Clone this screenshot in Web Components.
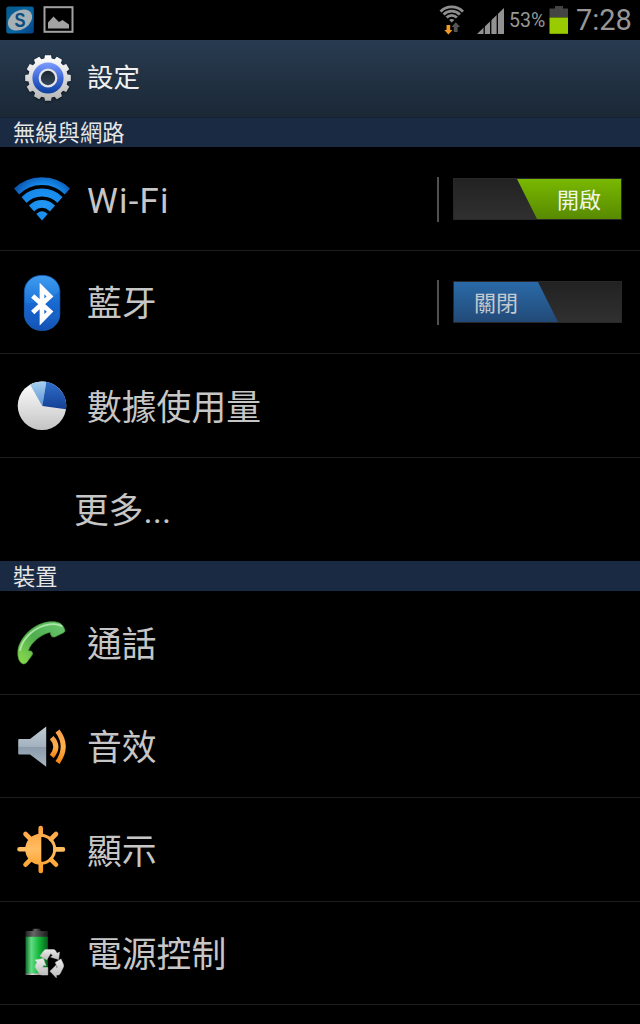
<!DOCTYPE html>
<html lang="zh-Hant">
<head>
<meta charset="utf-8">
<title>設定</title>
<style>
    body {
        margin: 0;
        width: 640px;
        height: 1024px;
        overflow: hidden;
        background: #000;
        color: #c6c6c6;
        font-family: Roboto, "Noto Sans CJK TC", sans-serif;
    }
</style>
</head>
<body>
<settings-screen></settings-screen>

<script>
const icons = {
    gear: `
        <defs>
            <linearGradient id="metal" x1="0" y1="0" x2="0" y2="1"><stop offset="0" stop-color="#fff"/><stop offset="1" stop-color="#b5b5b5"/></linearGradient>
            <linearGradient id="blue" x1="0" y1="0" x2="0" y2="1"><stop offset="0" stop-color="#7c9bff"/><stop offset=".5" stop-color="#3f68d8"/><stop offset="1" stop-color="#0b3f9c"/></linearGradient>
            <linearGradient id="hole" x1="0" y1="0" x2="0" y2="1"><stop offset="0" stop-color="#1a2431"/><stop offset="1" stop-color="#33475a"/></linearGradient>
        </defs>
        <path id="gearBody" fill="url(#metal)" style="filter: drop-shadow(0 1px 1px #0008)"/>
        <circle cx="30" cy="30" r="15.6" fill="url(#blue)"/>
        <circle cx="30" cy="30" r="8.3" fill="url(#hole)" stroke="#e4e4e4" stroke-width="2.2"/>`,
    wifi: `
        <defs>
            <radialGradient id="g" gradientUnits="userSpaceOnUse" cx="32" cy="36" r="34"><stop offset="0" stop-color="#2196f3"/><stop offset=".62" stop-color="#1588ea"/><stop offset="1" stop-color="#0a4fa6"/></radialGradient>
            <clipPath id="wedge"><path d="M30 51.5L-19 -4.5H79z"/></clipPath>
        </defs>
        <g clip-path="url(#wedge)" fill="none" stroke="url(#g)" stroke-width="7.8">
            <circle cx="30" cy="49" r="36.8"/>
            <circle cx="30" cy="49" r="25.5"/>
            <circle cx="30" cy="49" r="14.1"/>
            <circle cx="30" cy="49" r="6.7" fill="url(#g)" stroke="none"/>
        </g>`,
    bluetooth: `
        <defs>
            <linearGradient id="g" x1="0" y1="0" x2="0" y2="1"><stop offset="0" stop-color="#3f9df0"/><stop offset=".5" stop-color="#1c74d8"/><stop offset="1" stop-color="#1450b4"/></linearGradient>
        </defs>
        <rect x="12.4" y="2.4" width="35.4" height="55" rx="17" ry="16" fill="url(#g)" stroke="#1b62bd" stroke-width=".8"/>
        <path d="M47.5 18v20c-8 6-20 9-34.5 8V30c14 1 27-4 34.5-12z" fill="#0c4dbb" opacity=".25"/>
        <path d="M20.7 23L38 38.6L30 46.8V15.5L38 23.5L20.7 39.5" fill="none" stroke="#fff" stroke-width="4.7" stroke-miterlimit="8"/>`,
    usage: `
        <defs>
            <linearGradient id="w" x1="0" y1="0" x2="0" y2="1"><stop offset="0" stop-color="#fff"/><stop offset="1" stop-color="#c4c4c4"/></linearGradient>
            <linearGradient id="d" x1="0" y1="0" x2="0" y2="1"><stop offset="0" stop-color="#2f6fca"/><stop offset="1" stop-color="#143f94"/></linearGradient>
            <linearGradient id="l" x1="0" y1="0" x2="0" y2="1"><stop offset="0" stop-color="#a9d0f0"/><stop offset="1" stop-color="#5b94d4"/></linearGradient>
        </defs>
        <circle cx="30" cy="29.7" r="24.3" fill="url(#w)"/>
        <path d="M30.3 30L18 8.6A24.3 24.3 0 0 1 34.3 5.8z" fill="url(#l)"/>
        <path d="M30.3 30L34.3 5.8A24.3 24.3 0 0 1 54 33.3z" fill="url(#d)"/>`,
    phone: `
        <defs>
            <linearGradient id="g" x1="1" y1="0" x2="0" y2="1"><stop offset="0" stop-color="#6cc873"/><stop offset=".5" stop-color="#4fae4f"/><stop offset="1" stop-color="#8fdc4c"/></linearGradient>
        </defs>
        <path d="M6 37C8 24 22 10 38 8.8C46 8.3 51 10 53 17.5Q53 19 51.5 19.7L42.5 24Q39.5 24.6 38.8 21.8L38.3 19.3C29 21 19 29.5 16.3 37.5L19.5 38.3Q21.5 40 20 42.3L14.3 50Q11.5 52 9.3 50C6 47 5.5 42 6 37z" fill="url(#g)" stroke="#4d9d3e" stroke-width=".7"/>
        <path d="M8 37C11 25 23 13 38 11.3C43 10.8 47 11.5 49.5 13" fill="none" stroke="#b9edb4" stroke-width="1.8" stroke-linecap="round" opacity=".85"/>`,
    sound: `
        <defs>
            <linearGradient id="g" x1="0" y1="0" x2="0" y2="1"><stop offset="0" stop-color="#c2ccd5"/><stop offset=".5" stop-color="#a3b1bf"/><stop offset=".52" stop-color="#8c9cac"/><stop offset="1" stop-color="#a9b6c2"/></linearGradient>
            <linearGradient id="o" x1="0" y1="0" x2="0" y2="1"><stop offset="0" stop-color="#f9a04a"/><stop offset=".5" stop-color="#ffb04d"/><stop offset="1" stop-color="#f68412"/></linearGradient>
        </defs>
        <path d="M7.3 22H18L34.2 9.5V49.7L18 37.5H7.3Q6.2 37.5 6.2 36.4V23.1Q6.2 22 7.3 22z" fill="url(#g)"/>
        <g fill="none" stroke="url(#o)" stroke-width="5">
            <path d="M39.7 20.6Q48 29.5 39.7 39.3"/>
            <path d="M45.5 14Q57 29.5 45.5 45.5"/>
        </g>`,
    display: `
        <defs>
            <linearGradient id="g" gradientUnits="userSpaceOnUse" x1="0" y1="6" x2="0" y2="53"><stop offset="0" stop-color="#ffa03a"/><stop offset=".5" stop-color="#ffbd62"/><stop offset="1" stop-color="#ff9a1f"/></linearGradient>
        </defs>
        <path d="M28.7 8V15M28.8 44V51M7.5 29.3H14M43.5 29.4H51M13.5 14L18.5 19M39 39.7L44 44.7M44 14L39 19M18.5 39.7L13.5 44.7" stroke="url(#g)" stroke-width="4.6" stroke-linecap="round"/>
        <circle cx="28.7" cy="29.3" r="14" fill="none" stroke="url(#g)" stroke-width="3"/>
        <path d="M29.3 14.3A15 15 0 0 0 29.3 44.3z" fill="url(#g)"/>`,
    power: `
        <defs>
            <linearGradient id="g"><stop offset="0" stop-color="#0b6b25"/><stop offset=".25" stop-color="#63dc85"/><stop offset=".6" stop-color="#14b83a"/><stop offset="1" stop-color="#075f1c"/></linearGradient>
            <linearGradient id="c"><stop offset="0" stop-color="#222"/><stop offset=".35" stop-color="#666"/><stop offset="1" stop-color="#1a1a1a"/></linearGradient>
            <linearGradient id="b"><stop offset="0" stop-color="#555"/><stop offset=".3" stop-color="#ddd"/><stop offset="1" stop-color="#555"/></linearGradient>
            <linearGradient id="r" x1="0" y1="0" x2="0" y2="1"><stop offset="0" stop-color="#ececec"/><stop offset="1" stop-color="#bcbcbc"/></linearGradient>
        </defs>
        <rect x="20.3" y="4.7" width="8.4" height="4" rx="1" fill="url(#c)"/>
        <rect x="13.5" y="7" width="22.4" height="7" rx="1" fill="url(#c)"/>
        <rect x="13.5" y="12.8" width="22.4" height="37" fill="url(#g)"/>
        <rect x="13.5" y="49.3" width="22.4" height="1.7" fill="url(#b)"/>
        <g fill="url(#r)" stroke="#d2d2d2" stroke-width=".5" stroke-linejoin="round">
            <path d="M28 32L32 26.5Q32.8 25.6 34.2 25.6H41.3Q42.8 25.6 43.6 26.8L45 29.3L47.5 28L46.6 35.5L38.6 33L40.8 31.6L38.7 29.5L34.8 35.8z"/>
            <path d="M23 36L31.3 34.4L34 41.8L31.8 40.9L30.3 43.5H35.8V51H30Q28.3 51 27.4 49.6L23.6 43.8Q22.8 42.5 23.5 41L25 38.3z"/>
            <path d="M43.2 38.5L49 35L51.4 40.3Q52 42 51.2 43.5L48.2 49.5Q47.4 51 45.8 51H44.3V53.8L38 47.2L44.3 41V43.5H45.7z"/>
        </g>`
};

class SettingsIcon extends HTMLElement {
    constructor() {
        super();
        this.attachShadow({ mode: 'open' });
    }

    connectedCallback() {
        this.shadowRoot.innerHTML = `
            <style>
            :host { display: block; width: 60px; height: 60px; }
            svg { display: block; }
            </style>
            <svg width="60" height="60" viewBox="0 0 60 60">${icons[this.getAttribute('name')]}</svg>`;

        const gear = this.shadowRoot.querySelector('#gearBody');
        if (gear) {
            gear.setAttribute('d', this.gearPath(12));
        }
    }

    // outline of a gear around 30,30: each tooth is two outer and two inner points
    gearPath(teeth) {
        const steps = [[-0.35, 19.8], [-0.25, 23], [0.25, 23], [0.35, 19.8]];
        const points = [];
        for (let i = 0; i < teeth; i++) {
            for (const [shift, r] of steps) {
                const a = (i + shift) / teeth * Math.PI * 2;
                points.push((30 + Math.sin(a) * r).toFixed(2) + ' ' + (30 - Math.cos(a) * r).toFixed(2));
            }
        }
        return 'M' + points.join('L') + 'z';
    }
}
customElements.define('settings-icon', SettingsIcon);

const statusTemplate = document.createElement('template');
statusTemplate.innerHTML = `
    <style>
    :host {
        display: flex;
        height: 40px;
        background: #000;
        color: #979797;
    }
    svg { display: block; flex: none; }
    .notices { flex: 1; display: flex; }
    .percent { width: 40px; font-size: 19.5px; line-height: 41px; }
    .clock { width: 71px; padding-left: 7px; box-sizing: border-box; font-size: 29px; line-height: 40px; }
    </style>
    <div class="notices">
        <svg width="80" height="40">
            <defs>
                <linearGradient id="s" x1="0" y1="0" x2="1" y2="1"><stop offset="0" stop-color="#075b8e"/><stop offset=".6" stop-color="#0765a4"/><stop offset="1" stop-color="#063f86"/></linearGradient>
            </defs>
            <rect x="6.3" y="6.5" width="27.5" height="27" rx="2.5" fill="url(#s)"/>
            <ellipse cx="20" cy="20" rx="13" ry="9.3" fill="#a5b1b5" transform="rotate(-32 20 20)"/>
            <text x="20" y="27" text-anchor="middle" font-family="Liberation Sans, sans-serif" font-size="20" font-weight="bold" fill="#0b4c80" textLength="11" lengthAdjust="spacingAndGlyphs">S</text>
            <rect x="44.5" y="7.2" width="28" height="24.6" fill="none" stroke="#a2a2a2" stroke-width="2"/>
            <path d="M48 28.5V22.5L53.5 16.5L59 22L62.5 20L69 24.5V28.5z" fill="#a2a2a2"/>
        </svg>
    </div>
    <svg width="70" height="40">
        <defs><clipPath id="fan"><path d="M12.7 22.5L-6 4V0H32V4z"/></clipPath></defs>
        <g clip-path="url(#fan)" fill="none" stroke="#8e8e8e" stroke-width="2.8">
            <circle cx="12.7" cy="22.5" r="15.7"/>
            <circle cx="12.7" cy="22.5" r="11.4"/>
            <circle cx="12.7" cy="22.5" r="7.2"/>
            <circle cx="12.7" cy="22.5" r="3.5" fill="#8e8e8e" stroke="none"/>
        </g>
        <path d="M7.5 25H11.2V30H13.5L9.4 34.5L5.3 30H7.5z" fill="#f39a24"/>
        <path d="M14.8 32V27H12.5L16.8 22.3L21.1 27H18.6V32z" fill="#555"/>
        <path d="M38 34L65 8V34z" fill="#929292"/>
        <path d="M45.2 8V34M51.7 8V34M58.3 8V34" stroke="#000" stroke-width="1.3"/>
    </svg>
    <div class="percent">53%</div>
    <svg width="20" height="40">
        <path d="M6 6H14V8.5H19V17.5H.5V8.5H6z" fill="#444"/>
        <rect x=".5" y="17.5" width="18.5" height="16.3" fill="#99cc00"/>
    </svg>
    <div class="clock">7:28</div>
`;

customElements.define('status-bar',
    class extends HTMLElement {
        constructor() {
            super();
            this.attachShadow({ mode: 'open' })
                .appendChild(statusTemplate.content.cloneNode(true));
        }
    });

const titleTemplate = document.createElement('template');
titleTemplate.innerHTML = `
    <style>
    :host {
        display: flex;
        align-items: flex-start;
        box-sizing: border-box;
        height: 78px;
        padding: 8px 0 0 18px;
        background: linear-gradient(#283b50, #1b2836);
        border-bottom: 1px solid #16222f;
        color: #f0f0f0;
        font-size: 26.5px;
        line-height: 60px;
    }
    .title { margin-left: 9px; }
    </style>
    <slot name="icon"></slot>
    <div class="title"><slot></slot></div>
`;

customElements.define('title-bar',
    class extends HTMLElement {
        constructor() {
            super();
            this.attachShadow({ mode: 'open' })
                .appendChild(titleTemplate.content.cloneNode(true));
        }
    });

const sectionTemplate = document.createElement('template');
sectionTemplate.innerHTML = `
    <style>
    :host {
        display: block;
        height: 30px;
        padding-left: 13px;
        background: #1a2a42;
        color: #e6e6e6;
        font-size: 22.3px;
        line-height: 32px;
    }
    :host([first]) { height: 29px; line-height: 30px; }
    </style>
    <slot></slot>
`;

customElements.define('section-header',
    class extends HTMLElement {
        constructor() {
            super();
            this.attachShadow({ mode: 'open' })
                .appendChild(sectionTemplate.content.cloneNode(true));
        }
    });

const rowTemplate = document.createElement('template');
rowTemplate.innerHTML = `
    <style>
    :host {
        display: flex;
        align-items: flex-start;
        box-sizing: border-box;
        height: 103px;
        padding: 22px 18px 0 12px;
        border-bottom: 1px solid #1e1e1e;
        font-size: 34.8px;
        line-height: 60px;
    }
    :host([tall]) { height: 104px; }
    :host([plain]) { padding-left: 74px; border-bottom: 0; }
    :host([plain]) .label { margin-left: 0; }
    :host([latin]) .label { letter-spacing: 1.2px; }
    .label { flex: 1; margin-left: 15px; padding-top: 1px; }
    :host([tall]) .label { padding-top: 2px; }
    </style>
    <slot name="icon"></slot>
    <div class="label"><slot></slot></div>
    <slot name="control"></slot>
`;

customElements.define('settings-row',
    class extends HTMLElement {
        constructor() {
            super();
            this.attachShadow({ mode: 'open' })
                .appendChild(rowTemplate.content.cloneNode(true));
        }
    });

const switchTemplate = document.createElement('template');
switchTemplate.innerHTML = `
    <style>
    :host {
        display: flex;
        align-items: flex-start;
        margin-top: 7px;
        font-size: 22px;
        line-height: 44px;
    }
    :host([on]) { margin-top: 8px; }
    .divider {
        width: 2px;
        height: 45px;
        margin-right: 14px;
        background: #505050;
    }
    .track {
        display: flex;
        box-sizing: border-box;
        width: 169px;
        height: 42px;
        margin-top: 1px;
        border: 1px solid #282828;
        background: linear-gradient(#222, #303030);
    }
    .thumb {
        box-sizing: border-box;
        width: 104px;
        height: 40px;
        padding-left: 20px;
        background: linear-gradient(#2a6aa8, #224a78);
        color: #c4c9cf;
        clip-path: polygon(0 0, 84px 0, 100% 100%, 0 100%);
    }
    :host([on]) .thumb {
        margin-left: auto;
        padding-left: 40px;
        background: linear-gradient(#79b800, #588a00);
        color: #f0f5e8;
        clip-path: polygon(0 0, 100% 0, 100% 100%, 20px 100%);
    }
    </style>
    <div class="divider"></div>
    <div class="track"><div class="thumb"><slot></slot></div></div>
`;

customElements.define('toggle-switch',
    class extends HTMLElement {
        constructor() {
            super();
            this.attachShadow({ mode: 'open' })
                .appendChild(switchTemplate.content.cloneNode(true));
        }
    });

const screenTemplate = document.createElement('template');
screenTemplate.innerHTML = `
    <style>
    :host { display: block; }
    </style>
    <status-bar></status-bar>
    <title-bar><settings-icon slot="icon" name="gear"></settings-icon>設定</title-bar>
    <section-header first>無線與網路</section-header>
    <settings-row tall latin>
        <settings-icon slot="icon" name="wifi"></settings-icon>Wi-Fi
        <toggle-switch slot="control" on>開啟</toggle-switch>
    </settings-row>
    <settings-row>
        <settings-icon slot="icon" name="bluetooth"></settings-icon>藍牙
        <toggle-switch slot="control">關閉</toggle-switch>
    </settings-row>
    <settings-row tall><settings-icon slot="icon" name="usage"></settings-icon>數據使用量</settings-row>
    <settings-row plain>更多...</settings-row>
    <section-header>裝置</section-header>
    <settings-row tall><settings-icon slot="icon" name="phone"></settings-icon>通話</settings-row>
    <settings-row><settings-icon slot="icon" name="sound"></settings-icon>音效</settings-row>
    <settings-row tall><settings-icon slot="icon" name="display"></settings-icon>顯示</settings-row>
    <settings-row><settings-icon slot="icon" name="power"></settings-icon>電源控制</settings-row>
`;

customElements.define('settings-screen',
    class extends HTMLElement {
        constructor() {
            super();
            this.attachShadow({ mode: 'open' })
                .appendChild(screenTemplate.content.cloneNode(true));
        }
    });
</script>
</body>
</html>
